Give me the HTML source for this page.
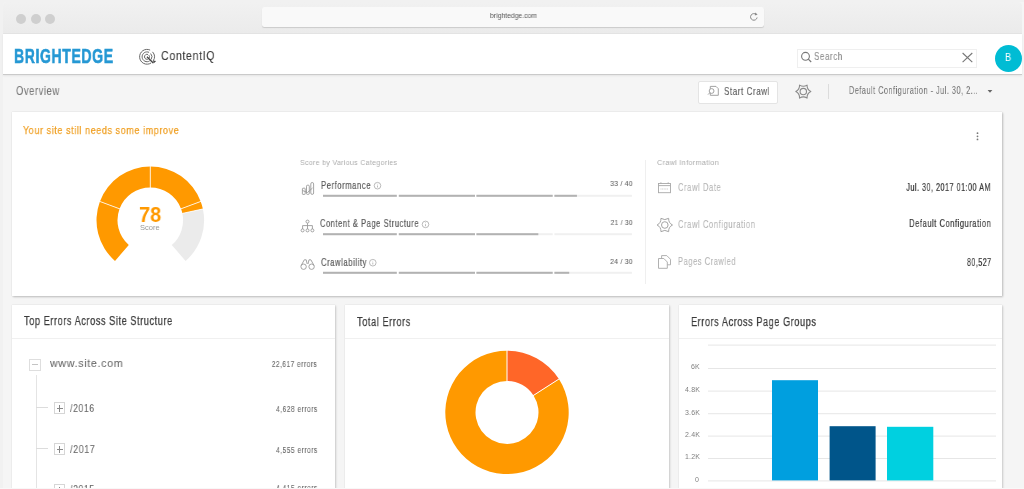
<!DOCTYPE html>
<html><head><meta charset="utf-8">
<style>
html,body{margin:0;padding:0}
body{width:1024px;height:489px;overflow:hidden;position:relative;background:#fafafa;font-family:"Liberation Sans",sans-serif}
.a{position:absolute;box-sizing:border-box}
.t{position:absolute;white-space:nowrap;line-height:1;transform-origin:0 0;will-change:transform}
.t.r{transform-origin:100% 0}
svg{position:absolute;left:0;top:0}
</style></head><body>
<!-- frame -->
<div class="a" style="left:0;top:0;width:1024px;height:489px;background:#f1f1f1"></div>
<div class="a" style="left:2.5px;top:2px;width:1021.5px;height:487px;background:#f5f5f5;border-radius:4px 0 0 0"></div>
<!-- chrome -->
<div class="a" style="left:3px;top:2px;width:1019px;height:32px;background:linear-gradient(#f1f1f1,#ebebeb);border-radius:4px 4px 0 0;border-bottom:1px solid #e4e4e4"></div>
<div class="a" style="left:16px;top:14px;width:10px;height:10px;border-radius:50%;background:#cfcfcf"></div>
<div class="a" style="left:31px;top:14px;width:10px;height:10px;border-radius:50%;background:#cfcfcf"></div>
<div class="a" style="left:45px;top:14px;width:10px;height:10px;border-radius:50%;background:#cfcfcf"></div>
<div class="a" style="left:262px;top:7px;width:501.5px;height:20px;background:#f9f9f9;border-radius:2.5px;box-shadow:0 1px 1px rgba(0,0,0,0.14)"></div>
<!-- app header -->
<div class="a" style="left:3px;top:34px;width:1019px;height:41px;background:#fff;border-bottom:1px solid #cacaca;box-shadow:0 1px 2px rgba(0,0,0,0.07)"></div>
<div class="a" style="left:797px;top:48.5px;width:180px;height:19px;border:1px solid #efefef;background:#fff"></div>
<div class="a" style="left:995px;top:44.5px;width:27px;height:27px;border-radius:50%;background:#00bcd4"></div>
<!-- toolbar -->
<div class="a" style="left:697.5px;top:80.5px;width:80px;height:23px;background:#fff;border:1px solid #e4e4e4;border-radius:2px"></div>
<div class="a" style="left:828px;top:84px;width:1px;height:15px;background:#dcdcdc"></div>
<!-- cards -->
<div class="a" style="left:12px;top:112px;width:990px;height:184px;background:#fff;box-shadow:0.5px 1px 2px rgba(0,0,0,0.22),0 0 1px rgba(0,0,0,0.14)"></div>
<div class="a" style="left:645px;top:160px;width:1px;height:124px;background:#efefef"></div>
<div class="a" style="left:12px;top:305px;width:322.5px;height:200px;background:#fff;box-shadow:0.5px 1px 2px rgba(0,0,0,0.16),0 0 1px rgba(0,0,0,0.14)"></div>
<div class="a" style="left:344.5px;top:305px;width:324px;height:200px;background:#fff;box-shadow:0.5px 1px 2px rgba(0,0,0,0.16),0 0 1px rgba(0,0,0,0.14)"></div>
<div class="a" style="left:678.5px;top:305px;width:323.5px;height:200px;background:#fff;box-shadow:0.5px 1px 2px rgba(0,0,0,0.16),0 0 1px rgba(0,0,0,0.14)"></div>
<div class="a" style="left:12px;top:338px;width:322.5px;height:1px;background:#f0f0f0"></div>
<div class="a" style="left:344.5px;top:338px;width:324px;height:1px;background:#f0f0f0"></div>
<div class="a" style="left:678.5px;top:338px;width:323.5px;height:1px;background:#f0f0f0"></div>
<!-- tree -->
<div class="a" style="left:28.8px;top:358.5px;width:12.4px;height:12.2px;border:1px solid #dedede"></div>
<div class="a" style="left:32px;top:364.4px;width:6px;height:1px;background:#c4c4c4"></div>
<div class="a" style="left:35.5px;top:375px;width:1px;height:120px;background:#e4e4e4"></div>
<div class="a" style="left:36px;top:407px;width:11.5px;height:1px;background:#dcdcdc"></div>
<div class="a" style="left:36px;top:448px;width:11.5px;height:1px;background:#dcdcdc"></div>
<div class="a" style="left:54.1px;top:402.4px;width:10.5px;height:12px;border:1px solid #d6d6d6"></div>
<div class="a" style="left:56.5px;top:408px;width:6px;height:0.9px;background:#888"></div>
<div class="a" style="left:59.1px;top:405.2px;width:0.9px;height:6.4px;background:#888"></div>
<div class="a" style="left:54.1px;top:443.4px;width:10.5px;height:12px;border:1px solid #d6d6d6"></div>
<div class="a" style="left:56.5px;top:449px;width:6px;height:0.9px;background:#888"></div>
<div class="a" style="left:59.1px;top:446.2px;width:0.9px;height:6.4px;background:#888"></div>
<div class="a" style="left:54.1px;top:484.4px;width:10.5px;height:12px;border:1px solid #d6d6d6"></div>
<div class="a" style="left:59.1px;top:487.2px;width:0.9px;height:6.4px;background:#888"></div>
<svg width="1024" height="489" viewBox="0 0 1024 489">
<path d="M115.00 260.90A53.8 53.8 0 0 1 99.91 201.46L119.58 208.81A32.8 32.8 0 0 0 128.78 245.05Z" fill="#ff9900"/><path d="M99.91 201.46A53.8 53.8 0 0 1 150.30 166.50L150.30 187.50A32.8 32.8 0 0 0 119.58 208.81Z" fill="#ff9900"/><path d="M150.30 166.50A53.8 53.8 0 0 1 200.69 201.46L181.02 208.81A32.8 32.8 0 0 0 150.30 187.50Z" fill="#ff9900"/><path d="M200.69 201.46A53.8 53.8 0 0 1 202.89 208.97L182.36 213.39A32.8 32.8 0 0 0 181.02 208.81Z" fill="#ff9900"/><path d="M202.89 208.97A53.8 53.8 0 0 1 185.60 260.90L171.82 245.05A32.8 32.8 0 0 0 182.36 213.39Z" fill="#ebebeb"/><line x1="120.51" y1="209.16" x2="98.97" y2="201.11" stroke="#fff" stroke-width="0.8"/><line x1="150.30" y1="188.50" x2="150.30" y2="165.50" stroke="#fff" stroke-width="0.8"/><line x1="180.09" y1="209.16" x2="201.63" y2="201.11" stroke="#fff" stroke-width="0.8"/><line x1="181.39" y1="213.60" x2="203.87" y2="208.76" stroke="#fff" stroke-width="0.8"/>
<path d="M507.00 350.70A61.7 61.7 0 0 1 558.92 379.07L533.51 395.38A31.5 31.5 0 0 0 507.00 380.90Z" fill="#ff6628"/><path d="M558.92 379.07A61.7 61.7 0 1 1 507.00 350.70L507.00 380.90A31.5 31.5 0 1 0 533.51 395.38Z" fill="#ff9900"/><line x1="532.67" y1="395.92" x2="559.76" y2="378.53" stroke="#fff" stroke-width="1"/><line x1="507.00" y1="381.90" x2="507.00" y2="349.70" stroke="#fff" stroke-width="1"/>
<rect x="323.00" y="194.80" width="73.80" height="2" fill="#f0f0f0"/><rect x="323.00" y="194.80" width="73.80" height="2" fill="#b2b2b2"/><rect x="398.80" y="194.80" width="76.20" height="2" fill="#f0f0f0"/><rect x="398.80" y="194.80" width="76.20" height="2" fill="#b2b2b2"/><rect x="476.40" y="194.80" width="76.30" height="2" fill="#f0f0f0"/><rect x="476.40" y="194.80" width="76.30" height="2" fill="#b2b2b2"/><rect x="554.40" y="194.80" width="77.50" height="2" fill="#f0f0f0"/><rect x="554.40" y="194.80" width="22.54" height="2" fill="#b2b2b2"/><rect x="323.00" y="233.20" width="73.80" height="2" fill="#f0f0f0"/><rect x="323.00" y="233.20" width="73.80" height="2" fill="#b2b2b2"/><rect x="398.80" y="233.20" width="76.20" height="2" fill="#f0f0f0"/><rect x="398.80" y="233.20" width="76.20" height="2" fill="#b2b2b2"/><rect x="476.40" y="233.20" width="76.30" height="2" fill="#f0f0f0"/><rect x="476.40" y="233.20" width="61.93" height="2" fill="#b2b2b2"/><rect x="554.40" y="233.20" width="77.50" height="2" fill="#f0f0f0"/><rect x="323.00" y="271.80" width="73.80" height="2" fill="#f0f0f0"/><rect x="323.00" y="271.80" width="73.80" height="2" fill="#b2b2b2"/><rect x="398.80" y="271.80" width="76.20" height="2" fill="#f0f0f0"/><rect x="398.80" y="271.80" width="76.20" height="2" fill="#b2b2b2"/><rect x="476.40" y="271.80" width="76.30" height="2" fill="#f0f0f0"/><rect x="476.40" y="271.80" width="76.30" height="2" fill="#b2b2b2"/><rect x="554.40" y="271.80" width="77.50" height="2" fill="#f0f0f0"/><rect x="554.40" y="271.80" width="14.82" height="2" fill="#b2b2b2"/>
<rect x="708" y="344.6" width="288" height="1" fill="#e6e6e6"/><rect x="708" y="368.0" width="288" height="1" fill="#e6e6e6"/><rect x="708" y="390.6" width="288" height="1" fill="#e6e6e6"/><rect x="708" y="413.2" width="288" height="1" fill="#e6e6e6"/><rect x="708" y="435.6" width="288" height="1" fill="#e6e6e6"/><rect x="708" y="458.0" width="288" height="1" fill="#e6e6e6"/><rect x="708" y="480.4" width="288" height="1" fill="#e6e6e6"/><rect x="772" y="380.2" width="46" height="100.2" fill="#009fdf"/><rect x="829.6" y="426.2" width="46" height="54.2" fill="#00558a"/><rect x="887" y="426.8" width="46.3" height="53.6" fill="#00d0e0"/>
<path d="M756.2 14.6 A3.3 3.3 0 1 0 757.1 17.5" fill="none" stroke="#888" stroke-width="1"/><path d="M755.2 12.6 L757.6 14.6 L754.9 15.6 Z" fill="#888"/><path d="M150.13 50.09A7.4 7.4 0 1 0 151.03 63.01" fill="none" stroke="#606060" stroke-width="0.95"/><path d="M153.21 60.83A7.4 7.4 0 0 0 152.50 51.85" fill="none" stroke="#606060" stroke-width="0.95"/><path d="M149.07 52.36A4.9 4.9 0 1 0 149.67 60.91" fill="none" stroke="#606060" stroke-width="0.95"/><path d="M151.11 59.47A4.9 4.9 0 0 0 150.64 53.52" fill="none" stroke="#606060" stroke-width="0.95"/><path d="M148.06 54.53A2.5 2.5 0 1 0 148.36 58.90" fill="none" stroke="#606060" stroke-width="0.95"/><path d="M149.10 58.16A2.5 2.5 0 0 0 148.86 55.13" fill="none" stroke="#606060" stroke-width="0.95"/><line x1="147.00" y1="56.80" x2="153.20" y2="63.00" stroke="#444" stroke-width="1.3"/><path d="M153.60 63.40 l-0.5 -3 l3 0.5 z" fill="#444"/><circle cx="805.5" cy="56.3" r="3.9" fill="none" stroke="#777" stroke-width="1.1"/><line x1="808.3" y1="59.1" x2="811.2" y2="62" stroke="#777" stroke-width="1.2"/><path d="M962.6 53 L972.3 62.2 M972.3 53 L962.6 62.2" stroke="#777" stroke-width="1.1"/><path d="M710.3 86.4 H716 L718.3 88.7 V95.3 H710.3 Z" fill="none" stroke="#999" stroke-width="0.9"/><circle cx="711.6" cy="91" r="2.4" fill="#fff" stroke="#999" stroke-width="0.9"/><line x1="709.9" y1="92.7" x2="708" y2="94.6" stroke="#999" stroke-width="0.9"/><path d="M810.80 91.60Q806.85 93.65 807.05 98.10Q803.30 95.70 799.55 98.10Q799.75 93.65 795.80 91.60Q799.75 89.55 799.55 85.10Q803.30 87.50 807.05 85.10Q806.85 89.55 810.80 91.60Z" fill="none" stroke="#8a8a8a" stroke-width="1.1" stroke-linejoin="round"/><circle cx="803.3" cy="91.6" r="3.2" fill="none" stroke="#8a8a8a" stroke-width="1.1"/><circle cx="977.5" cy="133.2" r="0.9" fill="#777"/><circle cx="977.5" cy="136.3" r="0.9" fill="#777"/><circle cx="977.5" cy="139.4" r="0.9" fill="#777"/><g fill="none" stroke="#9a9a9a" stroke-width="0.9"><rect x="302.4" y="188.2" width="2.8" height="6.2" rx="0.6"/><rect x="306.5" y="185.2" width="2.8" height="9.2" rx="1"/><rect x="310.8" y="182.5" width="2.8" height="11.9" rx="1.4"/><path d="M302.5 190.5 L307.5 192.5 L312.5 188"/></g><g fill="none" stroke="#9a9a9a" stroke-width="0.9"><circle cx="307.5" cy="221.6" r="1.5"/><path d="M307.5 223.1 V229 M302.6 229 V225.6 H312.4 V229"/><circle cx="302.6" cy="230.4" r="1.5"/><circle cx="307.5" cy="230.4" r="1.5"/><circle cx="312.4" cy="230.4" r="1.5"/></g><g fill="none" stroke="#9a9a9a" stroke-width="0.9"><circle cx="303.6" cy="266.7" r="2.7"/><circle cx="311.6" cy="266.7" r="2.7"/><path d="M301.2 265.5 L304.3 259.8 H306.2 L307.2 264 M314 265.5 L310.9 259.8 H309 L308 264"/></g><circle cx="377.5" cy="185.7" r="3.3" fill="none" stroke="#aaa" stroke-width="0.8"/><line x1="377.5" y1="185.5" x2="377.5" y2="187.5" stroke="#aaa" stroke-width="0.8"/><circle cx="377.5" cy="184.1" r="0.45" fill="#aaa"/><circle cx="425.5" cy="224.4" r="3.3" fill="none" stroke="#aaa" stroke-width="0.8"/><line x1="425.5" y1="224.2" x2="425.5" y2="226.2" stroke="#aaa" stroke-width="0.8"/><circle cx="425.5" cy="222.8" r="0.45" fill="#aaa"/><circle cx="372.8" cy="262.7" r="3.3" fill="none" stroke="#aaa" stroke-width="0.8"/><line x1="372.8" y1="262.5" x2="372.8" y2="264.5" stroke="#aaa" stroke-width="0.8"/><circle cx="372.8" cy="261.1" r="0.45" fill="#aaa"/><g fill="none" stroke="#a8a8a8" stroke-width="0.9"><rect x="658.5" y="183.5" width="12" height="9.2"/><line x1="658.5" y1="185.6" x2="670.5" y2="185.6"/><path d="M660.9 182.3 V184 M668.2 182.3 V184"/><line x1="660.5" y1="189" x2="668.5" y2="189" stroke-dasharray="1 0.6" stroke-width="0.6"/></g><path d="M672.50 225.00Q668.38 227.07 668.65 231.67Q664.80 229.13 660.95 231.67Q661.22 227.07 657.10 225.00Q661.22 222.93 660.95 218.33Q664.80 220.87 668.65 218.33Q668.38 222.93 672.50 225.00Z" fill="none" stroke="#a4a4a4" stroke-width="1" stroke-linejoin="round"/><circle cx="664.8" cy="225" r="3.3" fill="none" stroke="#a4a4a4" stroke-width="1"/><g fill="#fff" stroke="#a8a8a8" stroke-width="0.9"><path d="M661.6 255.6 H666.8 L670.5 259.3 V264.8 H661.6 Z"/><path d="M658.5 258.5 H663.8 L667.3 262 V268.3 H658.5 Z"/></g><path d="M987.6 90 H992.4 L990 92.8 Z" fill="#666"/>
</svg>
<div id="url" class="t" style="left:489.94px;top:13.18px;font-size:6.9px;color:#555;font-weight:400;letter-spacing:0px;transform:scaleX(0.9877);">brightedge.com</div>
<div id="logo" class="t" style="left:13.50px;top:45.80px;font-size:20.9px;color:#2598d4;font-weight:700;letter-spacing:0.9px;transform:scaleX(0.6718);-webkit-text-stroke:0.6px currentColor;">BRIGHTEDGE</div>
<div id="ciq" class="t" style="left:160.52px;top:49.38px;font-size:13.5px;color:#3a3a3a;font-weight:400;letter-spacing:0.75px;transform:scaleX(0.7929);-webkit-text-stroke:0.1px currentColor;">ContentIQ</div>
<div id="search" class="t" style="left:814.00px;top:50.52px;font-size:11px;color:#8a8a8a;font-weight:400;letter-spacing:0.75px;transform:scaleX(0.7310);-webkit-text-stroke:0.1px currentColor;">Search</div>
<div id="avatar" class="t" style="left:1005.23px;top:51.60px;font-size:10.6px;color:#fff;font-weight:400;letter-spacing:0px;transform:scaleX(0.8851);">B</div>
<div id="overview" class="t" style="left:15.66px;top:84.93px;font-size:12.4px;color:#7a7a7a;font-weight:400;letter-spacing:0.75px;transform:scaleX(0.7590);-webkit-text-stroke:0.1px currentColor;">Overview</div>
<div id="startcrawl" class="t" style="left:723.76px;top:86.46px;font-size:11.3px;color:#5a5a5a;font-weight:400;letter-spacing:0.75px;transform:scaleX(0.7159);-webkit-text-stroke:0.1px currentColor;">Start Crawl</div>
<div id="defcfg" class="t" style="left:848.73px;top:85.41px;font-size:11px;color:#777;font-weight:400;letter-spacing:0.75px;transform:scaleX(0.6638);-webkit-text-stroke:0.1px currentColor;">Default Configuration - Jul. 30, 2...</div>
<div id="yoursite" class="t" style="left:22.79px;top:125.04px;font-size:11.5px;color:#f0a126;font-weight:400;letter-spacing:0.75px;transform:scaleX(0.7828);-webkit-text-stroke:0.25px currentColor;">Your site still needs some improve</div>
<div id="score78" class="t" style="left:139.21px;top:204.20px;font-size:22.5px;color:#ff9900;font-weight:700;letter-spacing:0px;transform:scaleX(0.8879);">78</div>
<div id="scorelbl" class="t" style="left:140.08px;top:223.54px;font-size:7.5px;color:#999;font-weight:400;letter-spacing:0px;transform:scaleX(1.0025);">Score</div>
<div id="sbvc" class="t" style="left:300.18px;top:159.33px;font-size:8px;color:#ababab;font-weight:400;letter-spacing:0.35px;transform:scaleX(0.8797);">Score by Various Categories</div>
<div id="perf" class="t" style="left:321.09px;top:180.99px;font-size:10px;color:#5a5a5a;font-weight:400;letter-spacing:0.75px;transform:scaleX(0.7643);-webkit-text-stroke:0.2px currentColor;">Performance</div>
<div id="cps" class="t" style="left:320.17px;top:219.41px;font-size:10px;color:#5a5a5a;font-weight:400;letter-spacing:0.75px;transform:scaleX(0.7505);-webkit-text-stroke:0.2px currentColor;">Content &amp; Page Structure</div>
<div id="crawlab" class="t" style="left:320.76px;top:257.62px;font-size:10px;color:#5a5a5a;font-weight:400;letter-spacing:0.75px;transform:scaleX(0.7664);-webkit-text-stroke:0.2px currentColor;">Crawlability</div>
<div id="s1" class="t r" style="right:390.78px;top:180.49px;font-size:8px;color:#6a6a6a;font-weight:400;letter-spacing:0.35px;transform:scaleX(0.8446);-webkit-text-stroke:0.1px currentColor;">33 / 40</div>
<div id="s2" class="t r" style="right:391.25px;top:219.49px;font-size:8px;color:#6a6a6a;font-weight:400;letter-spacing:0.35px;transform:scaleX(0.8288);-webkit-text-stroke:0.1px currentColor;">21 / 30</div>
<div id="s3" class="t r" style="right:390.81px;top:257.61px;font-size:8px;color:#6a6a6a;font-weight:400;letter-spacing:0.35px;transform:scaleX(0.8429);-webkit-text-stroke:0.1px currentColor;">24 / 30</div>
<div id="ci" class="t" style="left:657.06px;top:159.08px;font-size:8px;color:#ababab;font-weight:400;letter-spacing:0.35px;transform:scaleX(0.9045);">Crawl Information</div>
<div id="cd" class="t" style="left:677.95px;top:182.43px;font-size:10.5px;color:#b4b4b4;font-weight:400;letter-spacing:0.75px;transform:scaleX(0.7296);-webkit-text-stroke:0.1px currentColor;">Crawl Date</div>
<div id="cc" class="t" style="left:677.82px;top:218.69px;font-size:10.5px;color:#b4b4b4;font-weight:400;letter-spacing:0.75px;transform:scaleX(0.7286);-webkit-text-stroke:0.1px currentColor;">Crawl Configuration</div>
<div id="pc" class="t" style="left:678.34px;top:256.48px;font-size:10.5px;color:#b4b4b4;font-weight:400;letter-spacing:0.75px;transform:scaleX(0.7172);-webkit-text-stroke:0.1px currentColor;">Pages Crawled</div>
<div id="v1" class="t r" style="right:33.07px;top:182.10px;font-size:10.5px;color:#3a3a3a;font-weight:400;letter-spacing:0.75px;transform:scaleX(0.6828);-webkit-text-stroke:0.22px currentColor;">Jul. 30, 2017 01:00 AM</div>
<div id="v2" class="t r" style="right:32.77px;top:218.42px;font-size:10.5px;color:#3a3a3a;font-weight:400;letter-spacing:0.75px;transform:scaleX(0.7187);-webkit-text-stroke:0.22px currentColor;">Default Configuration</div>
<div id="v3" class="t r" style="right:32.46px;top:257.22px;font-size:10.5px;color:#3a3a3a;font-weight:400;letter-spacing:0.75px;transform:scaleX(0.6721);-webkit-text-stroke:0.22px currentColor;">80,527</div>
<div id="t1" class="t" style="left:24.08px;top:315.27px;font-size:12.5px;color:#3c3c3c;font-weight:400;letter-spacing:0.75px;transform:scaleX(0.7367);-webkit-text-stroke:0.25px currentColor;">Top Errors Across Site Structure</div>
<div id="t2" class="t" style="left:357.02px;top:315.62px;font-size:12.5px;color:#3c3c3c;font-weight:400;letter-spacing:0.75px;transform:scaleX(0.7383);-webkit-text-stroke:0.25px currentColor;">Total Errors</div>
<div id="t3" class="t" style="left:690.88px;top:315.61px;font-size:12.5px;color:#3c3c3c;font-weight:400;letter-spacing:0.75px;transform:scaleX(0.7340);-webkit-text-stroke:0.25px currentColor;">Errors Across Page Groups</div>
<div id="www" class="t" style="left:50.07px;top:356.66px;font-size:11.6px;color:#6a6a6a;font-weight:400;letter-spacing:0.75px;transform:scaleX(0.9184);-webkit-text-stroke:0.1px currentColor;">www.site.com</div>
<div id="y16" class="t" style="left:70.23px;top:402.50px;font-size:11.3px;color:#6a6a6a;font-weight:400;letter-spacing:0.75px;transform:scaleX(0.7725);-webkit-text-stroke:0.1px currentColor;">/2016</div>
<div id="y17" class="t" style="left:70.10px;top:443.79px;font-size:11.3px;color:#6a6a6a;font-weight:400;letter-spacing:0.75px;transform:scaleX(0.7914);-webkit-text-stroke:0.1px currentColor;">/2017</div>
<div id="y15" class="t" style="left:70.23px;top:483.50px;font-size:11.3px;color:#6a6a6a;font-weight:400;letter-spacing:0.75px;transform:scaleX(0.7725);-webkit-text-stroke:0.1px currentColor;">/2015</div>
<div id="e0" class="t r" style="right:706.37px;top:359.72px;font-size:8.5px;color:#666;font-weight:400;letter-spacing:0.75px;transform:scaleX(0.7547);-webkit-text-stroke:0.1px currentColor;">22,617 errors</div>
<div id="e1" class="t r" style="right:705.95px;top:404.62px;font-size:8.5px;color:#666;font-weight:400;letter-spacing:0.75px;transform:scaleX(0.7608);-webkit-text-stroke:0.1px currentColor;">4,628 errors</div>
<div id="e2" class="t r" style="right:705.95px;top:445.76px;font-size:8.5px;color:#666;font-weight:400;letter-spacing:0.75px;transform:scaleX(0.7608);-webkit-text-stroke:0.1px currentColor;">4,555 errors</div>
<div id="e3" class="t r" style="right:705.95px;top:484.46px;font-size:8.5px;color:#666;font-weight:400;letter-spacing:0.75px;transform:scaleX(0.7608);-webkit-text-stroke:0.1px currentColor;">4,415 errors</div>
<div id="g6K" class="t r" style="right:324.07px;top:362.54px;font-size:7px;color:#808080;font-weight:400;letter-spacing:0.2px;transform:scaleX(1.0000);">6K</div>
<div id="g48K" class="t r" style="right:323.82px;top:386.11px;font-size:7px;color:#808080;font-weight:400;letter-spacing:0.2px;transform:scaleX(1.0000);">4.8K</div>
<div id="g36K" class="t r" style="right:323.82px;top:408.63px;font-size:7px;color:#808080;font-weight:400;letter-spacing:0.2px;transform:scaleX(1.0000);">3.6K</div>
<div id="g24K" class="t r" style="right:323.82px;top:430.75px;font-size:7px;color:#808080;font-weight:400;letter-spacing:0.2px;transform:scaleX(1.0000);">2.4K</div>
<div id="g12K" class="t r" style="right:323.82px;top:452.57px;font-size:7px;color:#808080;font-weight:400;letter-spacing:0.2px;transform:scaleX(1.0000);">1.2K</div>
<div id="g0" class="t r" style="right:325.00px;top:475.69px;font-size:7px;color:#808080;font-weight:400;letter-spacing:0.2px;transform:scaleX(1.0000);">0</div>
<!-- bottom edge -->
<div class="a" style="left:0;top:487.5px;width:1024px;height:1.5px;background:#f8f8f8"></div>
</body></html>
